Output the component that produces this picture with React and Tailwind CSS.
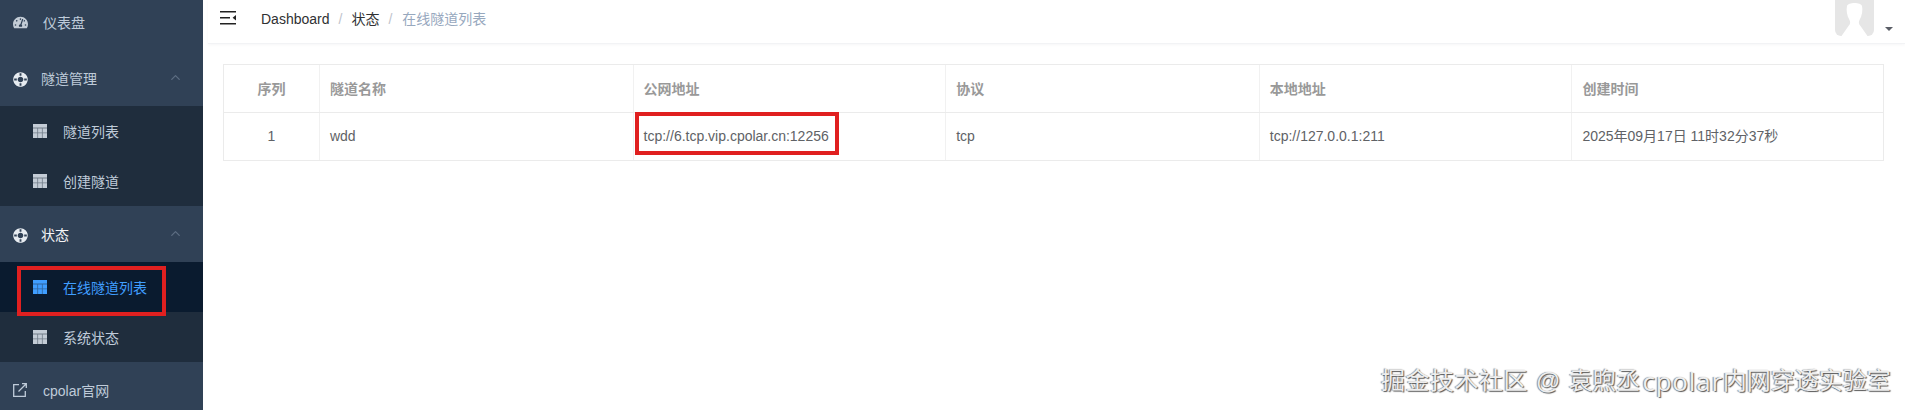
import React from "react";
import { FaTachometerAlt, FaLifeRing } from "react-icons/fa";
import { FiChevronUp } from "react-icons/fi";

const fontStack = "[font-family:'Liberation_Sans','Noto_Sans_CJK_SC',sans-serif]";

const TableIcon = ({ className }) => (
  <svg viewBox="0 0 14 14" className={className} fill="currentColor">
    <path d="M0 0h14v14H0z" />
    <path d="M0 3.500h14v1H0zM0 8.500h14v.8H0zM4.300 4h.8v10h-.8zM8.900 4h.8v10h-.8z" fill="#1f2d3d" fillOpacity="0.5" />
  </svg>
);

const ExternalIcon = () => (
  <svg viewBox="0 0 14 14" className="w-[14px] h-[14px]" fill="none" stroke="currentColor" strokeWidth="1.3">
    <path d="M6 1.700H.7v11.600h11.600V8" />
    <path d="M5.500 8.500 13 1M9 .7h4.300V5" />
  </svg>
);

const HamburgerIcon = () => (
  <svg viewBox="0 0 16 14" className="w-4 h-[14px]" fill="#222">
    <path d="M0 0h16v1.600H0zM0 6h10v1.600H0zM0 12h16v1.600H0z" />
    <path d="M16 4v5.600L12.600 6.800z" />
  </svg>
);

const GroupTitle = ({ label, active }) => (
  <div className={`flex items-center h-14 pl-[13px] pr-5 ${active ? "text-[#f4f4f5]" : "text-[#bfcbd9]"}`}>
    <FaLifeRing className="w-[15px] h-[15px] text-[#e6ebf0] shrink-0 rotate-45 translate-y-px" />
    <span className="ml-[13px] flex-1 translate-y-px">{label}</span>
    <FiChevronUp className="w-[15px] h-[15px] text-[#5d6d82] -translate-y-px" />
  </div>
);

const SubItem = ({ label, active }) => (
  <div
    className={`flex items-center h-[50px] pl-[33px] ${
      active ? "bg-[#0a1b2f] text-[#409eff]" : "bg-[#1f2d3d] text-[#bfcbd9]"
    }`}
  >
    <TableIcon className={`w-[14px] h-[14px] ${active ? "text-[#409eff]" : "text-[#c3ccd6]"}`} />
    <span className="ml-4 translate-y-px">{label}</span>
  </div>
);

const columns = [
  { title: "序列", value: "1", width: "w-[95px]", center: true },
  { title: "隧道名称", value: "wdd", width: "w-[314px]" },
  { title: "公网地址", value: "tcp://6.tcp.vip.cpolar.cn:12256", width: "w-[313px]" },
  { title: "协议", value: "tcp", width: "w-[314px]" },
  { title: "本地地址", value: "tcp://127.0.0.1:211", width: "w-[313px]" },
  { title: "创建时间", value: "2025年09月17日 11时32分37秒", width: "w-[312px]" },
];

const App = () => {
  return (
    <div className={`relative flex w-[1905px] h-[410px] overflow-hidden bg-white text-sm ${fontStack}`}>
      {/* Sidebar */}
      <aside className="w-[203px] shrink-0 bg-[#304156] text-[#bfcbd9]">
        <div className="-mt-[6px]">
          <div className="flex items-center h-14 pl-[13px]">
            <FaTachometerAlt className="w-[15px] h-[15px] text-[#c3ccd6]" />
            <span className="ml-[15px] translate-y-px">仪表盘</span>
          </div>
          <GroupTitle label="隧道管理" />
          <SubItem label="隧道列表" />
          <SubItem label="创建隧道" />
          <GroupTitle label="状态" active />
          <SubItem label="在线隧道列表" active />
          <SubItem label="系统状态" />
          <div className="flex items-center h-14 pl-[13px]">
            <span className="text-[#bfcbd9]">
              <ExternalIcon />
            </span>
            <span className="ml-4 translate-y-px">cpolar官网</span>
          </div>
        </div>
      </aside>

      {/* Main */}
      <main className="flex-1 min-w-0 pl-[5px]">
        <header className="relative flex items-center h-[44px] border-b border-[#f2f3f5] shadow-[0_1px_3px_rgba(0,21,41,0.04)] pl-3">
          <div className="-translate-y-[4px]">
            <HamburgerIcon />
          </div>
          <nav className="flex items-center ml-[25px] -translate-y-[3px]">
            <span className="text-[#303133]">Dashboard</span>
            <span className="mx-[9px] text-[#c0c4cc]">/</span>
            <span className="text-[#303133]">状态</span>
            <span className="ml-[9px] mr-[10px] text-[#c0c4cc]">/</span>
            <span className="text-[#97a8be]">在线隧道列表</span>
          </nav>
          <div className="absolute left-[1627px] top-0 w-[39px] h-9 rounded-b-[6px] bg-[#e6e6e6] overflow-hidden">
            <svg viewBox="0 0 39 36" className="w-full h-full" fill="#fff">
              <path d="M12 6c1-4 14-4 15 0 1 4 0 10-2.500 14-1 2-1 4 1 6l7 10H6.500l7-10c2-2 2-4 1-6C12 16 11 10 12 6z" />
            </svg>
          </div>
          <div className="absolute left-[1677px] top-[27px] w-0 h-0 border-x-[4px] border-x-transparent border-t-[4px] border-t-[#5a5e66]" />
        </header>

        <section className="pl-[15px] pt-5">
          <div className="flex flex-col w-[1661px] border border-[#ebebeb]">
            <div className="flex h-12 border-b border-[#ebebeb] font-bold text-[#999999]">
              {columns.map((col, i) => (
                <div
                  key={col.title}
                  className={`flex items-center px-[10px] ${col.width} ${i > 0 ? "border-l border-[#f1f1f1]" : ""} ${col.center ? "justify-center" : ""}`}
                >
                  {col.title}
                </div>
              ))}
            </div>
            <div className="flex h-[47px] text-[#606266]">
              {columns.map((col, i) => (
                <div
                  key={col.title}
                  className={`flex items-center px-[10px] pb-px ${col.width} ${i > 0 ? "border-l border-[#f1f1f1]" : ""} ${col.center ? "justify-center" : ""}`}
                >
                  {col.value}
                </div>
              ))}
            </div>
          </div>
        </section>
      </main>

      {/* Red annotation boxes */}
      <div className="absolute left-[17px] top-[266px] w-[149px] h-[50px] border-4 border-[#e02020]" />
      <div className="absolute left-[635px] top-[112px] w-[204px] h-[43px] border-4 border-[#e02020]" />

      {/* Watermark */}
      <div className="absolute left-[1381px] top-[365px] flex items-center text-[24px] leading-[32px] whitespace-nowrap text-[#eeeeee] [text-shadow:1px_1px_1px_#555,-1px_0_1px_#888]">
        <span className="tracking-[0.5px]">掘金技术社区</span>
        <span className="mx-[8px]">@</span>
        <span>袁煦丞</span>
        <span className="ml-[2px] text-[26px] tracking-[0.8px] [font-family:'Open_Sans',sans-serif]">cpolar</span>
        <span>内网穿透实验室</span>
      </div>
    </div>
  );
};

export default App;
